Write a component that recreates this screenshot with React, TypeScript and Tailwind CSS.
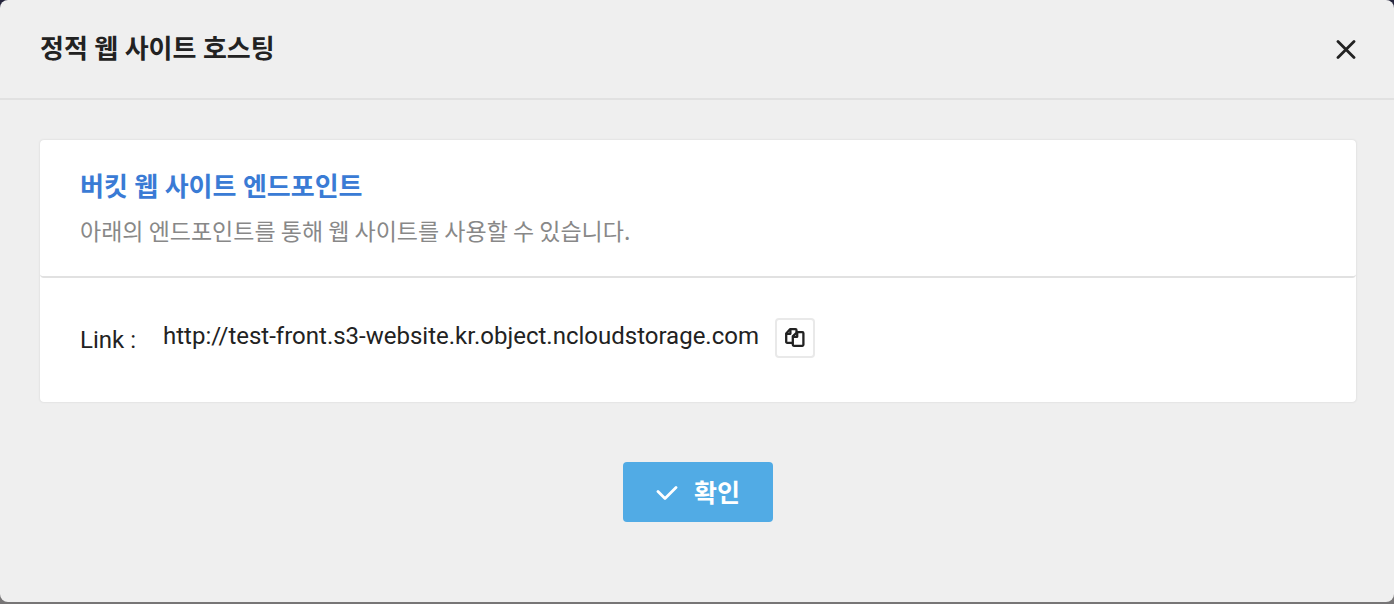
import { useState } from "react";

const ENDPOINT = "http://test-front.s3-website.kr.object.ncloudstorage.com";

function CloseIcon() {
  return (
    <svg width="20" height="20" viewBox="0 0 20 20" fill="none" stroke="currentColor" strokeWidth="2.8" strokeLinecap="round">
      <path d="M2 2.5L18 18.5M18 2.5L2 18.5" />
    </svg>
  );
}

function CopyIcon() {
  return (
    <svg width="20" height="20" viewBox="0 0 20 20" fill="none" stroke="currentColor" strokeWidth="2.3" strokeLinejoin="round">
      <path d="M7.5 14.8H2.2Q1.2 14.8 1.2 13.8V5.4L5 1.2H10.5Q11.5 1.2 11.5 2.2V4.5" />
      <path d="M1.2 5.8H5.4V1.2" />
      <path d="M12 4.2H17.4Q18.4 4.2 18.4 5.2V16.8Q18.4 17.8 17.4 17.8H8.8Q7.8 17.8 7.8 16.8V8.4Z" />
      <path d="M7.8 8.8H12.2V4.2" />
    </svg>
  );
}

function CheckIcon() {
  return (
    <svg width="22" height="16" viewBox="0 0 22 16" fill="none" stroke="currentColor" strokeWidth="2.8" strokeLinecap="round" strokeLinejoin="round">
      <path d="M2 7.5L9 14.5L20 3.5" />
    </svg>
  );
}

export default function App() {
  const [open, setOpen] = useState(true);

  const copyLink = () => {
    navigator.clipboard?.writeText(ENDPOINT);
  };

  return (
    <div className="min-h-screen bg-linear-to-b from-[#25253c] from-50% to-[#777576] to-50% pb-0.5 font-['Noto_Sans_CJK_KR',sans-serif] text-[#222]">
      {open && (
        <div role="dialog" aria-labelledby="dialog-title" className="rounded-lg bg-[#efefef] pb-20">
          <header className="flex items-center justify-between border-b-2 border-[#e1e1e1] pt-7 pr-[38px] pb-7 pl-10">
            <h1 id="dialog-title" className="font-[Roboto,'Noto_Sans_CJK_KR',sans-serif] text-[26px] leading-[42px] font-bold">
              정적 웹 사이트 호스팅
            </h1>
            <button type="button" aria-label="닫기" onClick={() => setOpen(false)} className="cursor-pointer">
              <CloseIcon />
            </button>
          </header>

          <main className="pt-10 pr-[38px] pl-10">
            <section className="rounded bg-white shadow-[0_0_2px_#ccc]">
              <div className="rounded border-b-2 border-[#e1e1e1] px-10 pt-7 pb-7">
                <h2 className="font-[Roboto,'Noto_Sans_CJK_KR',sans-serif] text-[26px] leading-[38px] font-bold text-[#3a7bd5]">
                  버킷 웹 사이트 엔드포인트
                </h2>
                <p className="pt-1.5 text-[23px] leading-9 text-[#888]">
                  아래의 엔드포인트를 통해 웹 사이트를 사용할 수 있습니다.
                </p>
              </div>
              <div className="flex items-start px-10 pt-10 pb-11 font-[Roboto,sans-serif] text-2xl">
                <span className="w-[83px] pt-1 leading-9">Link :</span>
                <span className="leading-9">{ENDPOINT}</span>
                <button type="button" aria-label="링크 복사" onClick={copyLink} className="ml-4 flex size-10 cursor-pointer items-center justify-center rounded border-2 border-[#e9e9e9] bg-white">
                  <CopyIcon />
                </button>
              </div>
            </section>

            <div className="flex justify-center pt-[60px]">
              <button type="button" onClick={() => setOpen(false)} className="flex h-[60px] w-[150px] cursor-pointer items-center justify-center gap-4 rounded bg-[#51abe5] text-[25px] font-bold text-white">
                <CheckIcon />
                확인
              </button>
            </div>
          </main>
        </div>
      )}
    </div>
  );
}
